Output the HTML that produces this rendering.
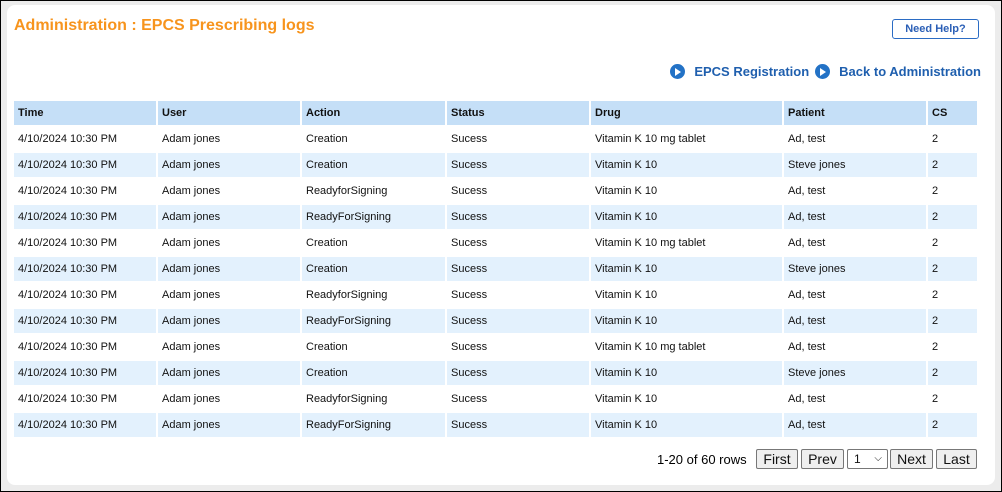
<!DOCTYPE html>
<html><head><style>
html,body{margin:0;padding:0}
body{width:1000px;height:490px;border:1px solid #000;background:#ececec;font-family:"Liberation Sans",Arial,sans-serif;position:relative;overflow:hidden}
.panel{position:absolute;left:6px;top:4px;width:988px;height:480px;background:#fff;border-radius:8px}
h1{position:absolute;left:13px;top:16px;margin:0;font-size:16px;font-weight:bold;color:#f7941d}
.help{position:absolute;left:891px;top:18px;width:87px;height:20px;border:1px solid #2b6cc4;border-radius:3px;color:#2b5fb6;font-weight:bold;font-size:11px;text-align:center;line-height:18px;box-sizing:border-box}
.links{position:absolute;right:20px;top:63px;font-size:13px;color:#1f5fae;font-weight:bold}
.links span{display:inline-flex;align-items:center;margin-left:6px}
.ic{width:15px;height:15px;border-radius:50%;background:#2372c6;display:inline-block;position:relative;margin-right:9px}
.ic:after{content:"";position:absolute;left:5px;top:3.5px;border-left:6px solid #fff;border-top:4px solid transparent;border-bottom:4px solid transparent}
table{position:absolute;left:11px;top:98px;border-collapse:separate;border-spacing:2px;font-size:11px;color:#111}
td,th{height:24px;padding:0 0 0 4px;text-align:left;box-sizing:border-box}
th{background:#c5dff7;font-weight:bold;height:24px}
tr.a td{background:#fff}
tr.b td{background:#e3f1fd}
.pg{position:absolute;font-size:13px}
.btn{position:absolute;top:448px;height:20px;border:1px solid #777;background:#efefef;border-radius:2px;font-size:14px;text-align:center;line-height:18px;box-sizing:border-box;color:#111}
</style></head><body>
<div class="panel"></div>
<h1>Administration : EPCS Prescribing logs</h1>
<div class="help">Need Help?</div>
<div class="links"><span><i class="ic"></i>EPCS Registration</span><span><i class="ic"></i>Back to Administration</span></div>
<table>
<tr><th style="width:142px">Time</th><th style="width:142px">User</th><th style="width:143px">Action</th><th style="width:142px">Status</th><th style="width:191px">Drug</th><th style="width:142px">Patient</th><th style="width:49px">CS</th></tr>
<tr class="a"><td>4/10/2024 10:30 PM</td><td>Adam jones</td><td>Creation</td><td>Sucess</td><td>Vitamin K 10 mg tablet</td><td>Ad, test</td><td>2</td></tr>
<tr class="b"><td>4/10/2024 10:30 PM</td><td>Adam jones</td><td>Creation</td><td>Sucess</td><td>Vitamin K 10</td><td>Steve jones</td><td>2</td></tr>
<tr class="a"><td>4/10/2024 10:30 PM</td><td>Adam jones</td><td>ReadyforSigning</td><td>Sucess</td><td>Vitamin K 10</td><td>Ad, test</td><td>2</td></tr>
<tr class="b"><td>4/10/2024 10:30 PM</td><td>Adam jones</td><td>ReadyForSigning</td><td>Sucess</td><td>Vitamin K 10</td><td>Ad, test</td><td>2</td></tr>
<tr class="a"><td>4/10/2024 10:30 PM</td><td>Adam jones</td><td>Creation</td><td>Sucess</td><td>Vitamin K 10 mg tablet</td><td>Ad, test</td><td>2</td></tr>
<tr class="b"><td>4/10/2024 10:30 PM</td><td>Adam jones</td><td>Creation</td><td>Sucess</td><td>Vitamin K 10</td><td>Steve jones</td><td>2</td></tr>
<tr class="a"><td>4/10/2024 10:30 PM</td><td>Adam jones</td><td>ReadyforSigning</td><td>Sucess</td><td>Vitamin K 10</td><td>Ad, test</td><td>2</td></tr>
<tr class="b"><td>4/10/2024 10:30 PM</td><td>Adam jones</td><td>ReadyForSigning</td><td>Sucess</td><td>Vitamin K 10</td><td>Ad, test</td><td>2</td></tr>
<tr class="a"><td>4/10/2024 10:30 PM</td><td>Adam jones</td><td>Creation</td><td>Sucess</td><td>Vitamin K 10 mg tablet</td><td>Ad, test</td><td>2</td></tr>
<tr class="b"><td>4/10/2024 10:30 PM</td><td>Adam jones</td><td>Creation</td><td>Sucess</td><td>Vitamin K 10</td><td>Steve jones</td><td>2</td></tr>
<tr class="a"><td>4/10/2024 10:30 PM</td><td>Adam jones</td><td>ReadyforSigning</td><td>Sucess</td><td>Vitamin K 10</td><td>Ad, test</td><td>2</td></tr>
<tr class="b"><td>4/10/2024 10:30 PM</td><td>Adam jones</td><td>ReadyForSigning</td><td>Sucess</td><td>Vitamin K 10</td><td>Ad, test</td><td>2</td></tr>
</table>
<div class="pg" style="left:656px;top:451px">1-20 of 60 rows</div>
<div class="btn" style="left:755px;width:42px">First</div>
<div class="btn" style="left:800px;width:43px">Prev</div>
<div class="btn" style="left:846px;width:41px;background:#fff;text-align:left;padding-left:6px;font-size:12px">1<span style="position:absolute;right:5px;top:0;font-size:10px">&#x2335;</span></div>
<div class="btn" style="left:889px;width:43px">Next</div>
<div class="btn" style="left:935px;width:41px">Last</div>
</body></html>
